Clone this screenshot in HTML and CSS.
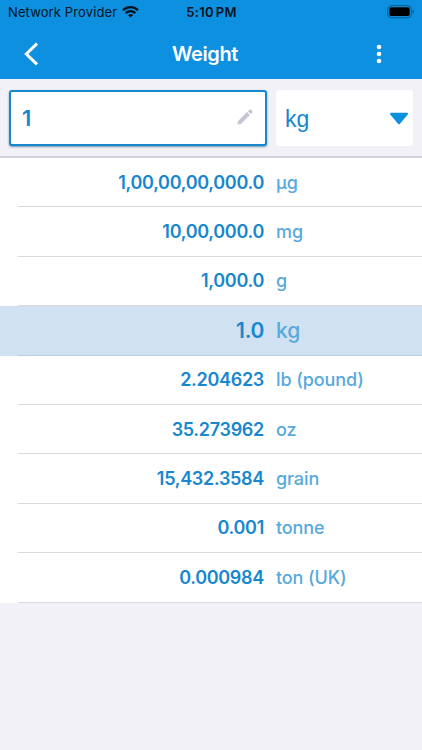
FILE: index.html
```
<!DOCTYPE html>
<html lang="en">
  <head>
    <meta charset="utf-8">
    <title>Weight</title>
    <link rel="stylesheet" href="styles.css">
  </head>
  <body>
    <div class="header">
      <div class="status">
        <div class="carrier">
          <span class="provider">Network Provider</span>
          <svg class="wifi" width="17" height="12" viewBox="0 0 17 12">
            <g fill="none" stroke="#03131d" stroke-width="2.3">
              <path d="M1 4.3a10.6 10.6 0 0 1 15 0"/>
              <path d="M3.7 7.1a6.8 6.8 0 0 1 9.6 0"/>
            </g>
            <path d="M8.5 11.6L6 9.2a3.6 3.6 0 0 1 5 0z" fill="#03131d"/>
          </svg>
        </div>
        <div class="clock">5:10 PM</div>
        <svg class="battery" width="28" height="14" viewBox="0 0 28 14">
          <rect x=".7" y=".7" width="23.6" height="12" rx="3.4" fill="none" stroke="#075a8c"/>
          <rect x="2.3" y="2.3" width="20.4" height="8.8" rx="1.8" fill="#000"/>
          <path d="M25.6 4.8q1.5.5 1.5 1.9t-1.5 1.9z" fill="#075a8c"/>
        </svg>
      </div>
      <div class="navbar">
        <a class="back">
          <svg width="16" height="24" viewBox="0 0 16 24">
            <path d="M14 1.6L3.3 12 14 22.4" fill="none" stroke="#fff" stroke-width="3"/>
          </svg>
        </a>
        <h1>Weight</h1>
        <a class="more">
          <svg width="6" height="20" viewBox="0 0 6 20" fill="#fff">
            <circle cx="3" cy="3" r="2.3"/>
            <circle cx="3" cy="10" r="2.3"/>
            <circle cx="3" cy="17" r="2.3"/>
          </svg>
        </a>
      </div>
    </div>

    <div class="entry">
      <div class="amount">
        <span>1</span>
        <svg width="16" height="16" viewBox="0 0 16 16" fill="#c7c6d2">
          <path d="M.4 15.6l.7-3.7L9.9 3.1l3 3-8.8 8.8z"/>
          <path d="M10.8 2.2L12.4.7q.8-.7 1.6 0L15.3 2q.7.8 0 1.6l-1.5 1.6z"/>
        </svg>
      </div>
      <div class="unitPicker">
        <span>kg</span>
        <svg width="20" height="13" viewBox="0 0 20 13">
          <path d="M2 1.8h16L10 11.3z" fill="#0d90df" stroke="#0d90df" stroke-width="2" stroke-linejoin="round"/>
        </svg>
      </div>
    </div>

    <ul class="results">
      <li><div><b>1,00,00,00,000.0</b><span>µg</span></div></li>
      <li><div><b>10,00,000.0</b><span>mg</span></div></li>
      <li><div><b>1,000.0</b><span>g</span></div></li>
      <li class="current"><div><b>1.0</b><span>kg</span></div></li>
      <li><div><b>2.204623</b><span>lb (pound)</span></div></li>
      <li><div><b>35.273962</b><span>oz</span></div></li>
      <li><div><b>15,432.3584</b><span>grain</span></div></li>
      <li><div><b>0.001</b><span>tonne</span></div></li>
      <li><div><b>0.000984</b><span>ton (UK)</span></div></li>
    </ul>
  </body>
</html>
```
FILE: styles.css
```
* {
  box-sizing: border-box;
}

body {
  margin: 0;
  min-height: 750px;
  background-color: #f1f1f7;
  font-family: Inter, "Liberation Sans", sans-serif;
  color: #1787cf;
}

svg {
  display: block;
}

.header {
  height: 79px;
  background-color: #0d90df;
}

.status {
  display: grid;
  grid-template-columns: 1fr auto 1fr;
  align-items: center;
  height: 24px;
  padding: 0 7px 0 8px;
  font-size: 13px;
  line-height: 24px;
  color: #03131d;
}

.carrier {
  display: flex;
  align-items: center;
  gap: 5px;
}

.provider {
  letter-spacing: 0.12px;
}

.clock {
  font-weight: 600;
  letter-spacing: 0.25px;
  word-spacing: -1.5px;
}

.battery {
  justify-self: end;
}

.navbar {
  display: grid;
  grid-template-columns: 1fr auto 1fr;
  align-items: center;
  height: 60px;
  padding: 0 40px 0 23px;
}

.navbar h1 {
  margin: 0;
  padding-left: 5px;
  font-size: 20px;
  font-weight: 600;
  letter-spacing: -0.4px;
  color: #fff;
}

.more {
  justify-self: end;
}

.entry {
  display: flex;
  gap: 9px;
  height: 79px;
  padding: 11px 9px;
  border-bottom: solid 2px #d0cfda;
}

.amount,
.unitPicker {
  display: flex;
  align-items: center;
  justify-content: space-between;
  height: 56px;
  background-color: #fff;
  border-radius: 3px;
}

.amount {
  width: 258px;
  padding: 0 12px 3px 11px;
  border: solid 2px #1787cf;
  box-shadow: 0 1px 2px rgba(0, 60, 100, 0.5);
  font-size: 22px;
  font-weight: 600;
}

.amount span {
  padding-top: 3px;
}

.unitPicker {
  flex: 1;
  padding: 0 4px 0 9px;
  font-family: "Liberation Sans", sans-serif;
  font-size: 23px;
}

.unitPicker span {
  padding-top: 2px;
}

.results {
  margin: 0;
  padding: 0;
  list-style: none;
  background-color: #fff;
}

.results li {
  height: 49.4px;
  padding-left: 18px;
}

.results div {
  display: grid;
  grid-template-columns: 246px 1fr;
  column-gap: 12px;
  align-items: center;
  height: 100%;
  border-bottom: solid 1px #d9d9de;
  font-size: 18px;
}

.results b {
  text-align: right;
  font-weight: 600;
  letter-spacing: -0.3px;
}

.results span {
  font-weight: 500;
  letter-spacing: -0.1px;
  color: #58a9dc;
}

.results .current {
  background-color: #d0e2f1;
}

.results .current div {
  border-color: #bacddd;
  font-size: 21px;
}
```
